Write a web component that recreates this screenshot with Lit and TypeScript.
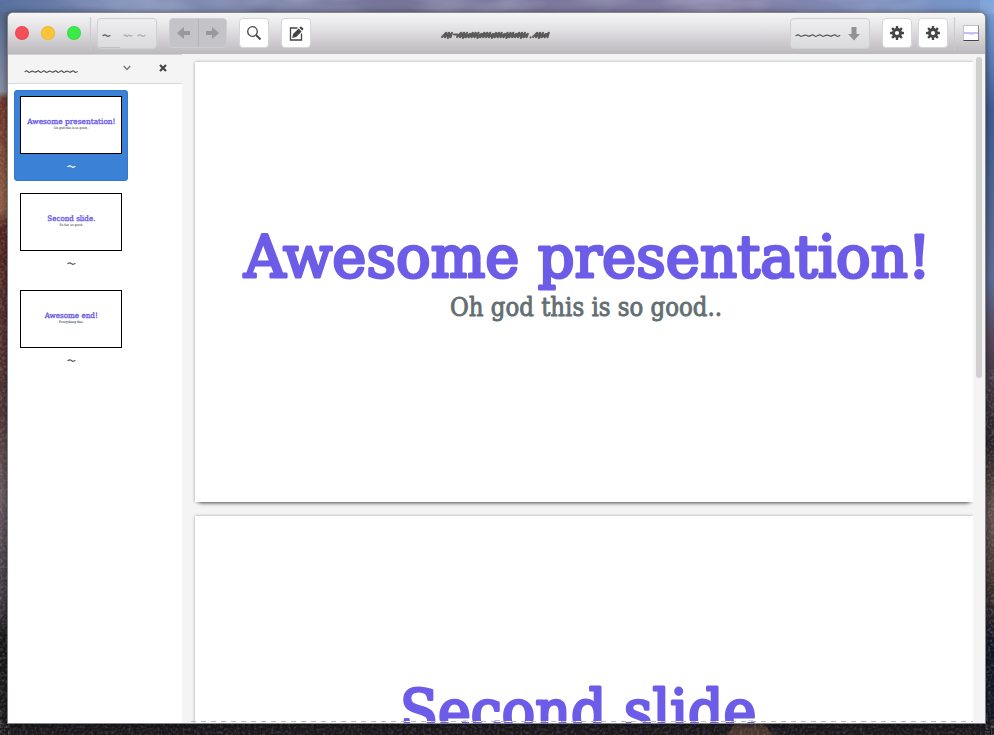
import { LitElement, html, svg, css } from "lit";
import { customElement, property } from "lit/decorators.js";

/** Builds a row of small flattened waves, one every `step` pixels. */
function wave(width: number, step: number, amp: number): string {
  let d = `M0 ${amp + 1.8}`;
  let i = 0;
  for (let x = 0; x < width - step / 2; x += step) {
    const a = amp * (i % 3 === 1 ? 0.7 : 1);
    d += ` q${step * 0.3} ${-a * 1.7} ${step * 0.5} 0 t${step * 0.5} 0`;
    i++;
  }
  return d;
}

/** Builds a slanted zigzag from x to end. */
function zigzag(x: number, end: number): string {
  let d = `M${x} 7`;
  let i = 0;
  for (let p = x; p < end - 3; p += 2.9) {
    const lift = i % 4 === 3 ? 1 : 0;
    d += ` L${p + 4.2} ${2.8 + lift} L${p + 2.9} ${7.2 + (i % 5 === 1 ? 0.8 : 0)}`;
    i++;
  }
  return d;
}

@customElement("scribble-label")
class ScribbleLabel extends LitElement {
  @property({ type: Number }) width = 10;
  @property({ type: Number }) step = 7;
  @property({ type: Number }) amp = 0.8;
  @property({ type: Number }) weight = 1.2;
  static styles = css`
    :host { display: block; flex: none; color: #555; }
    svg { display: block; overflow: visible; }
  `;
  render() {
    return html`<svg width=${this.width} height="5">
      <path d=${wave(this.width, this.step, this.amp)} fill="none" stroke="currentColor" stroke-width=${this.weight} stroke-linecap="round"/>
    </svg>`;
  }
}

@customElement("slide-page")
class SlidePage extends LitElement {
  @property() heading = "";
  @property() note = "";
  @property({ type: Number }) headingWidth = 0;
  @property({ type: Number }) noteWidth = 0;
  @property({ type: Number }) shift = 0;
  static styles = css`
    :host { display: block; }
    svg { display: block; width: 100%; height: 100%; overflow: visible; }
    text { text-anchor: middle; font-family: "DejaVu Serif", serif; stroke-linejoin: round; }
    .heading { font-size: 58.5px; fill: #6c5ce7; stroke: #6c5ce7; stroke-width: 3px; }
    .note { font-size: 25.5px; fill: #636e72; stroke: #636e72; stroke-width: 0.9px; }
  `;
  render() {
    return html`<svg viewBox="0 0 778 440" preserveAspectRatio="none">
      ${svg`<text class="heading" x=${391 + this.shift} y="214.5" textLength=${this.headingWidth} lengthAdjust="spacingAndGlyphs">${this.heading}</text>
      <text class="note" x="391" y="254" textLength=${this.noteWidth} lengthAdjust="spacingAndGlyphs">${this.note}</text>`}
    </svg>`;
  }
}

interface Slide { heading: string; note: string; hw: number; nw: number; shift: number; }

const slides: Slide[] = [
  { heading: "Awesome presentation!", note: "Oh god this is so good..", hw: 687, nw: 272, shift: 1.5 },
  { heading: "Second slide.", note: "So far, so good.", hw: 374, nw: 184, shift: 1 },
  { heading: "Awesome end!", note: "Everything fine.", hw: 414, nw: 196, shift: 0 },
];

const gear = svg`<g fill="#454545">
  ${[0, 45, 90, 135].map((a) => svg`<rect x="5.8" y="0" width="2.4" height="14" rx=".5" transform="rotate(${a} 7 7)"/>`)}
  <circle cx="7" cy="7" r="5"/></g><circle cx="7" cy="7" r="2.1" fill="#fff"/>`;

@customElement("app-root")
class AppRoot extends LitElement {
  static styles = css`
    * { box-sizing: border-box; }
    :host { display: block; width: 994px; height: 735px; overflow: hidden; font-family: "Liberation Sans", sans-serif; }
    svg { display: block; flex: none; }
    .desktop { display: grid; width: 994px; height: 735px; }
    .desktop > * { grid-area: 1 / 1; }
    .window {
      margin: 13px 9px 12px 8px; width: 977px; height: 710px; display: flex; flex-direction: column;
      border-radius: 5px 5px 0 0; overflow: hidden; background: #f4f4f4; z-index: 1;
    }
    .edge { margin: 12px 0 0 7px; width: 979px; height: 712px; border-radius: 6px 6px 0 0; background: #858488; box-shadow: 0 1px 7px #0008; }
    .bar {
      flex: none; height: 41px; display: flex; align-items: center; padding: 0 6px 1px 7px;
      background: linear-gradient(#f6f5f6, #e4e3e5 35%, #bcb9be);
    }
    .light { flex: none; width: 14px; height: 14px; border-radius: 50%; border: 1px solid #0001; margin-right: 12px; }
    .red { background: #f54e57; }
    .yellow { background: #fdc436; }
    .green { background: #39ea49; margin-right: 9px; }
    .rule { flex: none; width: 1px; height: 33px; background: #cbcacd; margin-top: 1px; }
    .field {
      flex: none; display: flex; align-items: center; height: 31px; border: 1px solid #d0cfd2; border-radius: 4px;
      background: linear-gradient(#efeff0, #dad9dc); margin-top: 1px;
    }
    .pages {
      width: 60px; margin-left: 6px; padding: 3px 0 0 5px; gap: 6px;
      background: linear-gradient(#c2c0c4, #c2c0c4) 2px 100% / 20px 1px no-repeat, linear-gradient(#efeff0, #dad9dc);
    }
    .zoom { width: 80px; padding-left: 5px; gap: 8px; }
    .zoom scribble-label { margin-top: 4px; }
    .dim { color: #aaa; }
    .first { margin-right: 8px; }
    .nav { flex: none; display: flex; width: 58px; height: 30px; margin: 0 12px; border: 1px solid #cecdd0; border-radius: 4px; background: #c4c3c7; }
    .nav span { flex: 1; display: grid; place-items: center; padding-bottom: 1px; }
    .nav span + span { border-left: 1px solid #b7b5b9; }
    .button {
      flex: none; width: 30px; height: 30px; display: grid; place-items: center; background: #fff;
      border: 1px solid #d6d5d7; border-radius: 4px;
    }
    .edit { margin-left: 12px; }
    .title { flex: 1; padding: 4px 0 0 130px; }
    .g1 { margin-left: 12px; }
    .g2 { margin-left: 6px; margin-right: 6px; }
    .mini { flex: none; margin-left: 8px; width: 16px; height: 16px; background: #fff; border: 1px solid #c4c4c6; border-right-color: #888; border-bottom-color: #444; }
    .mini i { display: block; height: 2px; margin-top: 6px; background: #c6c0f6; }
    .mini b { display: block; height: 1px; width: 5px; margin: 0 auto; background: #ddd; }
    .body { flex: 1; display: flex; min-height: 0; }
    .side { flex: none; width: 174px; background: #fff; display: flex; flex-direction: column; }
    .head { flex: none; height: 30px; background: #f4f4f4; border-bottom: 1px solid #dadada; border-top: 1px solid #d3d2d4; display: flex; align-items: center; padding: 0 0 2px 17px; }
    .head scribble-label { margin: 6px 46px 0 0; }
    .cross { margin-left: 28px; }
    .list { padding: 6px; display: flex; flex-direction: column; gap: 6px; }
    .item { width: 114px; height: 91px; border-radius: 4px; padding: 6px; display: flex; flex-direction: column; }
    .item scribble-label { margin: 10px auto 0; }
    .active { background: #3b82d6; box-shadow: inset 0 0 0 1px #327acc; }
    .active scribble-label { color: #fff; }
    .thumb { flex: none; width: 102px; height: 58px; border: 1px solid #000; background: #fff; }
    .thumb slide-page { width: 100px; height: 56px; }
    .main { flex: 1; display: grid; grid-template-columns: 791px 12px; overflow: hidden; }
    .view { display: flex; flex-direction: column; gap: 14px; padding: 8px 0 0 13px; overflow: hidden; }
    .page { flex: none; width: 778px; height: 440px; background: #fff; box-shadow: 0 0 3px #0005; }
    .page slide-page { height: 440px; }
    .shade { box-shadow: 0 0 3px #0005, 0 5px 4px -4px #0009; }
    .bottom { position: absolute; left: 191px; top: 721px; z-index: 2; width: 782px; height: 1px; background: repeating-linear-gradient(90deg, #bbb 0 5px, #fff 5px 10px); }
    .scroll { margin: 3px 0 0 3px; width: 6px; height: 321px; background: #d0d0d0; border-radius: 3px; }
  `;

  /** Mountain wallpaper: sky gradient, red cliff at the left, dark forest at the foot. */
  private wallpaper() {
    return svg`
      <defs>
        <linearGradient id="sky"><stop offset="0" stop-color="#59709e"/><stop offset=".15" stop-color="#8190b8"/><stop offset=".4" stop-color="#767497"/><stop offset=".75" stop-color="#837fa5"/><stop offset="1" stop-color="#7599cf"/></linearGradient>
        <linearGradient id="left" x2="0" y2="1"><stop offset="0" stop-color="#56698f"/><stop offset=".11" stop-color="#8992a6"/><stop offset=".12" stop-color="#6e3327"/><stop offset=".27" stop-color="#936149"/><stop offset=".3" stop-color="#56251f"/><stop offset=".55" stop-color="#4f3637"/><stop offset=".67" stop-color="#695b61"/><stop offset=".82" stop-color="#3c3843"/><stop offset=".87" stop-color="#171a18"/><stop offset="1" stop-color="#181c18"/></linearGradient>
        <linearGradient id="right" x2="0" y2="1"><stop offset="0" stop-color="#7fa5db"/><stop offset=".15" stop-color="#425d91"/><stop offset=".38" stop-color="#5d6d94"/><stop offset=".46" stop-color="#57485a"/><stop offset=".6" stop-color="#272328"/><stop offset=".7" stop-color="#65524f"/><stop offset=".8" stop-color="#3c302f"/><stop offset=".88" stop-color="#111424"/><stop offset="1" stop-color="#171a2b"/></linearGradient>
        <filter id="grain" x="0" y="0" width="1" height="1"><feTurbulence type="fractalNoise" baseFrequency=".35" numOctaves="2" seed="4"/><feColorMatrix values="0 0 0 0 .5  0 0 0 0 .43  0 0 0 0 .42  2 0 0 0 -.85"/></filter>
        <filter id="cloud" x="0" y="0" width="1" height="1"><feTurbulence type="fractalNoise" baseFrequency=".012 .04" numOctaves="3" seed="9"/><feColorMatrix values="0 0 0 0 .75  0 0 0 0 .78  0 0 0 0 .88  1.6 0 0 0 -.6"/></filter>
      </defs>
      <rect width="994" height="30" fill="url(#sky)"/>
      <rect y="12" width="12" height="723" fill="url(#left)"/>
      <rect x="980" width="14" height="735" fill="url(#right)"/>
      <rect y="720" width="994" height="15" fill="#1b191d"/>
      <path d="M735 723h28l10 12h-46z" fill="#49372f"/>
      <rect width="994" height="14" filter="url(#cloud)" opacity=".4"/>
      <rect y="94" width="9" height="641" filter="url(#grain)" opacity=".4"/>
      <rect x="985" y="370" width="9" height="365" filter="url(#grain)" opacity=".4"/>
      <rect y="723" width="994" height="12" filter="url(#grain)" opacity=".3"/>`;
  }

  private page(s: Slide) {
    return html`<slide-page .heading=${s.heading} .note=${s.note} .headingWidth=${s.hw} .noteWidth=${s.nw} .shift=${s.shift}></slide-page>`;
  }

  render() {
    return html`<div class="desktop">
      <svg width="994" height="735">${this.wallpaper()}</svg>
      <div class="edge"></div>
      <div class="window">
        <div class="bar">
          <i class="light red"></i><i class="light yellow"></i><i class="light green"></i>
          <i class="rule"></i>
          <div class="field pages">
            <scribble-label class="first" width="7"></scribble-label>
            <scribble-label class="dim" width="8" step="4"></scribble-label>
            <scribble-label class="dim" width="7"></scribble-label>
          </div>
          <div class="nav">
            <span><svg width="14" height="12"><path d="M0 6 7 0v4h6v4H7v4z" fill="#99989b"/></svg></span>
            <span><svg width="14" height="12"><path d="M14 6 7 0v4H1v4h6v4z" fill="#99989b"/></svg></span>
          </div>
          <div class="button"><svg width="14" height="14" fill="none" stroke="#484848"><circle cx="5.5" cy="5.5" r="4.8" stroke-width="1.3"/><path d="m9 9 4.5 4.5" stroke-width="2"/></svg></div>
          <div class="button edit"><svg width="15" height="15"><path d="M8.5 2H1.5v12h11V7.5" fill="none" stroke="#444" stroke-width="1.3"/><path d="m3.2 12 .9-3.9 5.5-5.5 3 3L7.1 11zM10.4 1.8l1-1q.6-.5 1.3.1l1.4 1.4q.6.7 0 1.3l-1 1z" fill="#444"/></svg></div>
          <div class="title"><svg width="111" height="10" fill="none" stroke="#5a5a5a" stroke-width="2" stroke-linejoin="round" stroke-linecap="round">
            <path d="${zigzag(1, 12)} M13 4.5h3.5 ${zigzag(16, 87)} M89.5 7.2v.3 ${zigzag(92, 109)}"/></svg></div>
          <div class="field zoom">
            <scribble-label width="44" step="7.3"></scribble-label>
            <svg width="12" height="14"><path d="M3.5 0h5v7H12l-6 6.5L0 7h3.5z" fill="#929194"/></svg>
          </div>
          <div class="button g1"><svg width="14" height="14">${gear}</svg></div>
          <div class="button g2"><svg width="14" height="14">${gear}</svg></div>
          <i class="rule"></i>
          <div class="mini"><i></i><b></b></div>
        </div>
        <div class="body">
          <div class="side">
            <div class="head">
              <scribble-label width="52" step="5.8"></scribble-label>
              <svg width="8" height="6"><path d="m.7 1 3.3 3.4L7.3 1" fill="none" stroke="#777" stroke-width="1.4"/></svg>
              <svg class="cross" width="8" height="8"><path d="m1 1 6 6m0-6L1 7" stroke="#444" stroke-width="2.2"/></svg>
            </div>
            <div class="list">
              ${slides.map((s, i) => html`<div class="item ${i === 0 ? "active" : ""}"><div class="thumb">${this.page(s)}</div><scribble-label width="7"></scribble-label></div>`)}
            </div>
          </div>
          <div class="main">
            <div class="view">
              <div class="page shade">${this.page(slides[0])}</div>
              <div class="page">${this.page(slides[1])}</div>
            </div>
            <div class="scroll"></div>
          </div>
        </div>
      </div>
      <div class="bottom"></div>
    </div>`;
  }
}
